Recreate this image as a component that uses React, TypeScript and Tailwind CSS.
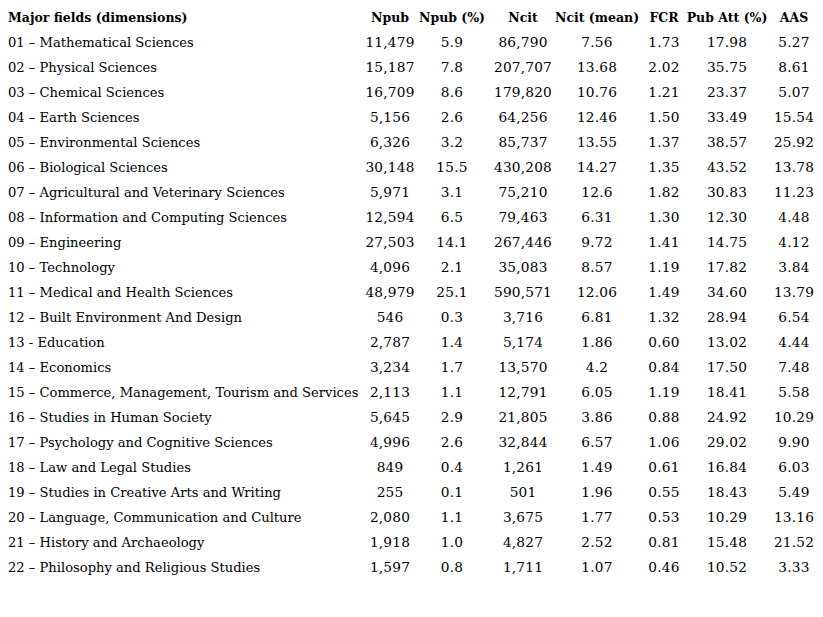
const columns = [
  { key: "npub", label: "Npub", w: "w-[56px]", ml: "ml-0" },
  { key: "pct", label: "Npub (%)", w: "w-[56px]", ml: "ml-[6px]" },
  { key: "ncit", label: "Ncit", w: "w-[56px]", ml: "ml-[15px]" },
  { key: "mean", label: "Ncit (mean)", w: "w-[56px]", ml: "ml-[18px]" },
  { key: "fcr", label: "FCR", w: "w-[56px]", ml: "ml-[11px]" },
  { key: "att", label: "Pub Att (%)", w: "w-[56px]", ml: "ml-[7px]" },
  { key: "aas", label: "AAS", w: "w-[56px]", ml: "ml-[11px]" },
];

const rows: string[][] = [
  ["01 – Mathematical Sciences", "11,479", "5.9", "86,790", "7.56", "1.73", "17.98", "5.27"],
  ["02 – Physical Sciences", "15,187", "7.8", "207,707", "13.68", "2.02", "35.75", "8.61"],
  ["03 – Chemical Sciences", "16,709", "8.6", "179,820", "10.76", "1.21", "23.37", "5.07"],
  ["04 – Earth Sciences", "5,156", "2.6", "64,256", "12.46", "1.50", "33.49", "15.54"],
  ["05 – Environmental Sciences", "6,326", "3.2", "85,737", "13.55", "1.37", "38.57", "25.92"],
  ["06 – Biological Sciences", "30,148", "15.5", "430,208", "14.27", "1.35", "43.52", "13.78"],
  ["07 – Agricultural and Veterinary Sciences", "5,971", "3.1", "75,210", "12.6", "1.82", "30.83", "11.23"],
  ["08 – Information and Computing Sciences", "12,594", "6.5", "79,463", "6.31", "1.30", "12.30", "4.48"],
  ["09 – Engineering", "27,503", "14.1", "267,446", "9.72", "1.41", "14.75", "4.12"],
  ["10 – Technology", "4,096", "2.1", "35,083", "8.57", "1.19", "17.82", "3.84"],
  ["11 – Medical and Health Sciences", "48,979", "25.1", "590,571", "12.06", "1.49", "34.60", "13.79"],
  ["12 – Built Environment And Design", "546", "0.3", "3,716", "6.81", "1.32", "28.94", "6.54"],
  ["13 - Education", "2,787", "1.4", "5,174", "1.86", "0.60", "13.02", "4.44"],
  ["14 – Economics", "3,234", "1.7", "13,570", "4.2", "0.84", "17.50", "7.48"],
  ["15 – Commerce, Management, Tourism and Services", "2,113", "1.1", "12,791", "6.05", "1.19", "18.41", "5.58"],
  ["16 – Studies in Human Society", "5,645", "2.9", "21,805", "3.86", "0.88", "24.92", "10.29"],
  ["17 – Psychology and Cognitive Sciences", "4,996", "2.6", "32,844", "6.57", "1.06", "29.02", "9.90"],
  ["18 – Law and Legal Studies", "849", "0.4", "1,261", "1.49", "0.61", "16.84", "6.03"],
  ["19 – Studies in Creative Arts and Writing", "255", "0.1", "501", "1.96", "0.55", "18.43", "5.49"],
  ["20 – Language, Communication and Culture", "2,080", "1.1", "3,675", "1.77", "0.53", "10.29", "13.16"],
  ["21 – History and Archaeology", "1,918", "1.0", "4,827", "2.52", "0.81", "15.48", "21.52"],
  ["22 – Philosophy and Religious Studies", "1,597", "0.8", "1,711", "1.07", "0.46", "10.52", "3.33"],
];

export default function App() {
  return (
    <div className="w-[823px] h-[617px] bg-white text-black overflow-hidden pt-[6px]">
      <div className="flex h-[24px] items-center font-['DejaVu_Serif',serif] text-[12.5px] font-bold">
        <div className="w-[362px] pl-2 whitespace-nowrap">Major fields (dimensions)</div>
        {columns.map((c) => (
          <div key={c.key} className={`${c.w} ${c.ml} flex justify-center whitespace-nowrap`}>
            {c.label}
          </div>
        ))}
      </div>
      {rows.map((r) => (
        <div key={r[0]} className="flex h-[25px] items-center font-['DejaVu_Serif',serif]">
          <div className="w-[362px] pl-2 whitespace-nowrap text-[13.1px]">{r[0]}</div>
          {columns.map((c, i) => (
            <div
              key={c.key}
              className={`${c.w} ${c.ml} flex justify-center whitespace-nowrap text-[13.7px] tracking-[0.2px]`}
            >
              {r[i + 1]}
            </div>
          ))}
        </div>
      ))}
    </div>
  );
}
